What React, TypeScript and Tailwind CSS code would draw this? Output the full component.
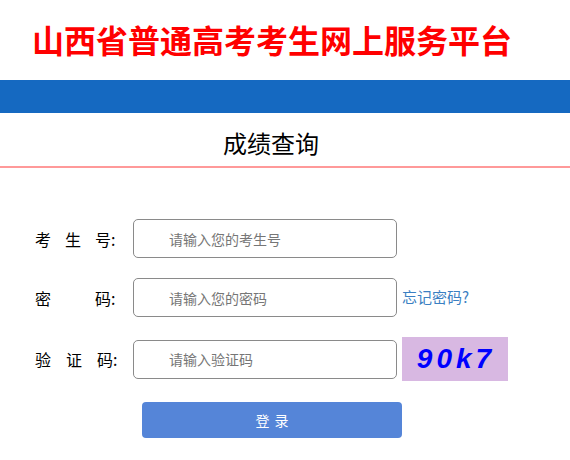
import React from "react";

const cjk = "font-['Noto_Sans_CJK_SC',sans-serif]";

const Field = ({ placeholder }: { placeholder: string }) => (
    <input
        type="text"
        placeholder={placeholder}
        className={`w-[264px] h-[39px] border border-[#8a8a8a] rounded-[5px] pl-[35px] text-[14px] text-[#333] placeholder:text-[#767676] outline-none ${cjk}`}
    />
);

const App = () => {
    return (
        <div className={`w-[570px] h-[460px] bg-white overflow-hidden ${cjk}`}>
            {/* Header */}
            <div className="h-[80px] pl-[32px] flex items-center pb-[3px]">
                <h1 className="text-[32px] font-bold text-[#ff0000] leading-none">
                    山西省普通高考考生网上服务平台
                </h1>
            </div>
            <div className="h-[33px] bg-[#1569c1]"></div>

            {/* Page title */}
            <div className="h-[53px] flex items-center justify-center pr-[28px] pt-[6px]">
                <h2 className="text-[24px] text-black leading-none">成绩查询</h2>
            </div>
            <div className="h-[2px] bg-[#ff9999]"></div>

            {/* Form */}
            <div className="pl-[35px] pt-[51px] flex flex-col">
                <div className="flex items-center h-[39px]">
                    <div className="w-[98px] flex gap-[14px] text-[16px] text-black">
                        <span>考</span>
                        <span>生</span>
                        <span>号:</span>
                    </div>
                    <Field placeholder="请输入您的考生号" />
                </div>

                <div className="flex items-center h-[39px] mt-[20px]">
                    <div className="w-[98px] flex gap-[44px] text-[16px] text-black">
                        <span>密</span>
                        <span>码:</span>
                    </div>
                    <Field placeholder="请输入您的密码" />
                    <a className="ml-[5px] text-[15px] text-[#3b7fc2]">忘记密码?</a>
                </div>

                <div className="flex items-center h-[44px] mt-[20px]">
                    <div className="w-[98px] flex gap-[15px] text-[16px] text-black">
                        <span>验</span>
                        <span>证</span>
                        <span>码:</span>
                    </div>
                    <Field placeholder="请输入验证码" />
                    <div className="ml-[5px] w-[106px] h-[44px] bg-[#d8b8e2] flex items-center justify-center">
                        <span className="font-['Liberation_Sans',Arial,sans-serif] font-bold italic text-[28px] tracking-[4px] text-[#0000ff] leading-none pl-[2px]">
                            90k7
                        </span>
                    </div>
                </div>

                <button className="mt-[21px] ml-[107px] w-[260px] h-[36px] bg-[#5585d8] rounded-[4px] text-white text-[14px] tracking-[5px] pl-[5px]">
                    登录
                </button>
            </div>
        </div>
    );
};

export default App;
